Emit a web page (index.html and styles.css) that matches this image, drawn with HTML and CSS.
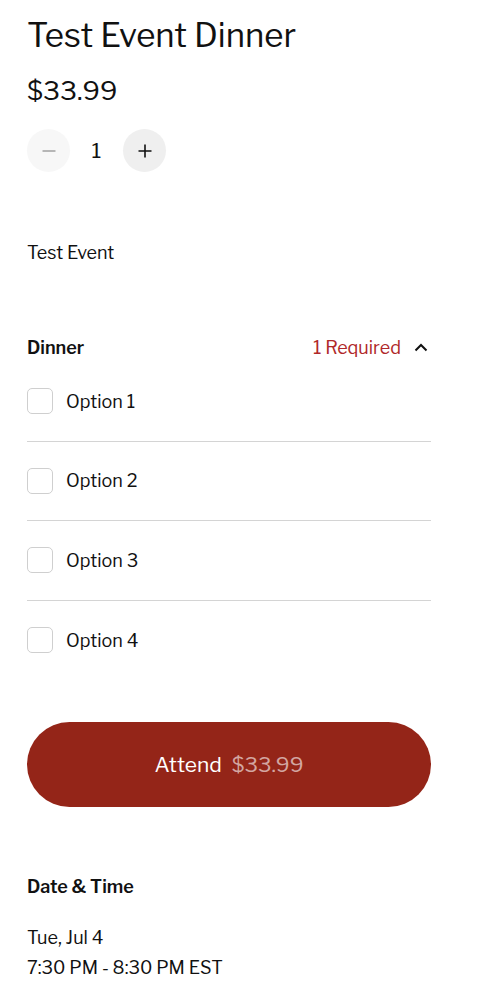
FILE: index.html
```html
<!DOCTYPE html>
<html lang="en">
<head>
<meta charset="utf-8">
<title>Test Event Dinner</title>
<link rel="stylesheet" href="styles.css">
</head>
<body>
<main class="page">
  <h1 class="title">Test Event Dinner</h1>
  <div class="price">$33.99</div>
  <div class="stepper">
    <button class="step step-minus" aria-label="Decrease">
      <svg width="16" height="16" viewBox="0 0 16 16"><path d="M1.5 8h13" stroke="#9a9a9a" stroke-width="1.4" fill="none"/></svg>
    </button>
    <span class="qty">1</span>
    <button class="step step-plus" aria-label="Increase">
      <svg width="16" height="16" viewBox="0 0 16 16"><path d="M1.5 8h13M8 1.5v13" stroke="#111" stroke-width="1.6" fill="none"/></svg>
    </button>
  </div>
  <p class="desc">Test Event</p>

  <section class="group">
    <div class="group-head">
      <span class="group-name">Dinner</span>
      <span class="group-req">1 Required</span>
      <svg class="chev" width="14" height="14" viewBox="0 0 14 14"><path d="M1.5 9.5L7 4l5.5 5.5" stroke="#111" stroke-width="2" fill="none"/></svg>
    </div>
    <ul class="options">
      <li class="option"><span class="box"></span><span class="opt-label">Option 1</span></li>
      <li class="option"><span class="box"></span><span class="opt-label">Option 2</span></li>
      <li class="option"><span class="box"></span><span class="opt-label">Option 3</span></li>
      <li class="option"><span class="box"></span><span class="opt-label">Option 4</span></li>
    </ul>
  </section>

  <button class="attend"><span class="attend-label">Attend</span><span class="attend-price">$33.99</span></button>

  <section class="when">
    <h2 class="when-title">Date &amp; Time</h2>
    <p class="when-line">Tue, Jul 4</p>
    <p class="when-line">7:30 PM - 8:30 PM EST</p>
  </section>
</main>
</body>
</html>
```
FILE: styles.css
```css
* { box-sizing: border-box; }
html, body { margin: 0; padding: 0; background: #fff; }
body {
  font-family: "Libre Franklin", Lato, "Noto Sans", sans-serif;
  color: #111;
}
.page {
  width: 404px;
  margin-left: 27px;
  padding-top: 13px;
}
.title {
  margin: 0;
  font-size: 33px;
  font-weight: 400;
  line-height: 44px;
  letter-spacing: 0;
}
.price {
  margin-top: 17px;
  font-size: 26.5px;
  line-height: 34px;
}
.stepper {
  display: flex;
  align-items: center;
  margin-top: 21px;
}
.step {
  width: 43px;
  height: 43px;
  border-radius: 50%;
  border: none;
  padding: 0;
  display: flex;
  align-items: center;
  justify-content: center;
}
.step-minus { background: #f7f7f7; }
.step-plus { background: #efefef; }
.qty {
  width: 53px;
  text-align: center;
  font-size: 21px;
}
.desc {
  margin: 69px 0 0;
  font-size: 18px;
  line-height: 24px;
}
.group { margin-top: 71px; }
.group-head {
  display: flex;
  align-items: center;
  font-size: 18px;
  line-height: 24px;
}
.group-name { font-weight: 600; flex: 1; }
.group-req { color: #b0282a; }
.chev { margin-left: 13px; margin-right: 3px; }
.options { list-style: none; margin: 2px 0 0; padding: 0; }
.option {
  display: flex;
  align-items: center;
  gap: 13px;
  height: 79.5px;
  border-bottom: 1px solid #d4d4d4;
  font-size: 18px;
}
.option:last-child { border-bottom: none; }
.box {
  width: 26px;
  height: 26px;
  border: 1px solid #cfcfcf;
  border-radius: 5px;
}
.attend {
  display: flex;
  align-items: center;
  justify-content: center;
  gap: 10px;
  width: 100%;
  height: 85px;
  margin-top: 42px;
  border: none;
  border-radius: 43px;
  background: #942518;
  font-family: inherit;
  font-size: 21px;
  color: #fff;
}
.attend-price { color: rgba(255, 255, 255, 0.6); }
.when { margin-top: 68px; }
.when-title {
  margin: 0;
  font-size: 18px;
  font-weight: 600;
  line-height: 24px;
}
.when-line {
  margin: 0;
  font-size: 18px;
  line-height: 30px;
}
.when-title + .when-line { margin-top: 24px; }
```
